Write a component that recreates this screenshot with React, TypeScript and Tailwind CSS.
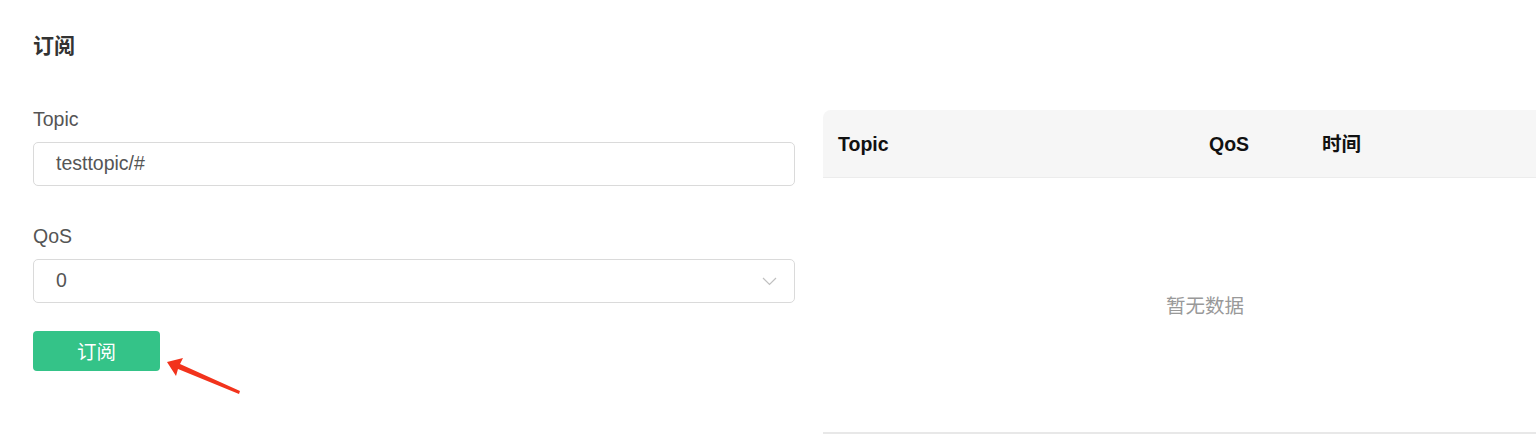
import React from "react";

const font = { fontFamily: '"Liberation Sans", Arial, "Noto Sans CJK SC", sans-serif' };

export default function App() {
  return (
    <div
      className="relative w-[1536px] h-[442px] overflow-hidden bg-white font-['Liberation_Sans','Noto_Sans_CJK_SC',sans-serif]"
      style={font}
    >
      <div className="flex pl-[33px] pt-[31px]">
        {/* Left column */}
        <div className="w-[762px] shrink-0 flex flex-col">
          <div className="text-[21px] leading-[30px] font-bold text-[#333333]">订阅</div>
          <div className="mt-[44px] text-[19.5px] leading-[28px] text-[#555555]">Topic</div>
          <div className="mt-[9px] h-[44px] rounded-[5px] border border-[#dadada] flex items-center pl-[22px] text-[19.5px] text-[#555555]">
            testtopic/#
          </div>
          <div className="mt-[36px] text-[19.5px] leading-[28px] text-[#555555]">QoS</div>
          <div className="mt-[9px] h-[44px] rounded-[5px] border border-[#dadada] flex items-center justify-between pl-[22px] pr-[17px] text-[19.5px] text-[#555555]">
            <span>0</span>
            <svg width="15" height="9" viewBox="0 0 15 9" fill="none">
              <path d="M1 1 L7.5 7.5 L14 1" stroke="#c0c0c0" strokeWidth="1.2" />
            </svg>
          </div>
          <button className="mt-[28px] w-[127px] h-[40px] rounded-[4px] bg-[#34c388] text-white text-[19.5px] leading-[40px] flex items-center justify-center pt-[2px]">
            订阅
          </button>
        </div>

        {/* Right column */}
        <div className="ml-[28px] w-[764px] shrink-0 pt-[79px]">
          <div className="h-[68px] bg-[#f6f6f6] rounded-t-[8px] border-b border-[#ececec] grid grid-cols-[386px_113px_1fr] items-center text-[19.5px] font-bold text-[#111111] pt-[3px]">
            <div className="pl-[15px]">Topic</div>
            <div>QoS</div>
            <div>时间</div>
          </div>
          <div className="h-[256px] border-b-2 border-[#e8e8e8] flex items-center justify-center text-[19.5px] text-[#999999] pt-[4px]">
            暂无数据
          </div>
        </div>
      </div>

      {/* annotation arrow */}
      <svg className="absolute left-0 top-0 pointer-events-none" width="1536" height="442">
        <polygon
          points="167,362 183,358 180,364 240,391 239,394 178,369 176,376"
          fill="#f2331c"
        />
      </svg>
    </div>
  );
}
